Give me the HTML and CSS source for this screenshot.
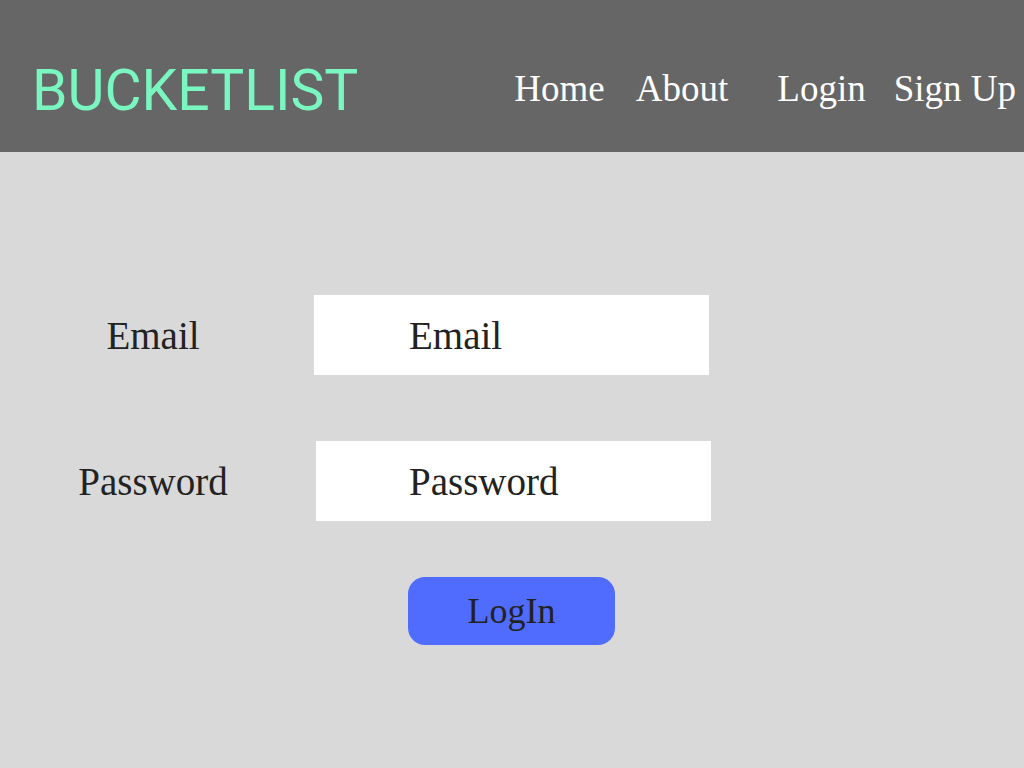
FILE: index.html
```html
<!DOCTYPE html>
<html lang="en">
<head>
<meta charset="utf-8">
<title>BucketList – Login</title>
<link rel="stylesheet" href="styles.css">
</head>
<body>
<header class="site-header">
  <a class="brand" href="#">BUCKETLIST</a>
  <nav class="main-nav">
    <a class="nav-link nav-home" href="#">Home</a>
    <a class="nav-link nav-about" href="#">About</a>
    <a class="nav-link" href="#">Login</a>
    <a class="nav-link" href="#">Sign Up</a>
  </nav>
</header>
<main class="login">
  <form class="login-form">
    <div class="field">
      <label class="field-label" for="email">Email</label>
      <input class="field-input" id="email" type="text" placeholder="Email">
    </div>
    <div class="field">
      <label class="field-label" for="password">Password</label>
      <input class="field-input field-input--shifted" id="password" type="text" placeholder="Password">
    </div>
    <div class="actions">
      <button class="login-btn" type="button">LogIn</button>
    </div>
  </form>
</main>
</body>
</html>
```
FILE: styles.css
```css
* { box-sizing: border-box; }

html, body {
  margin: 0;
  padding: 0;
}

body {
  background: #d9d9d9;
  width: 1024px;
  height: 768px;
  overflow: hidden;
  font-family: "Liberation Serif", "Times New Roman", serif;
  color: #222222;
}

.site-header {
  height: 152px;
  background: #666666;
  display: flex;
  align-items: flex-start;
  justify-content: space-between;
  padding: 0 8px 0 32px;
}

.brand {
  margin-top: 62px;
  font-family: Roboto, "Liberation Sans", sans-serif;
  font-size: 57px;
  line-height: 1;
  color: #7af7c1;
  text-decoration: none;
}

.main-nav {
  margin-top: 70px;
  display: flex;
  gap: 28px;
}

.nav-link {
  font-size: 37px;
  line-height: 1;
  color: #ffffff;
  text-decoration: none;
}

.nav-home {
  margin-right: 3px;
}

.nav-about {
  margin-right: 21px;
}

.login {
  padding-top: 143px;
}

.field {
  display: grid;
  grid-template-columns: 306px 395px;
  column-gap: 8px;
  align-items: center;
  height: 80px;
}

.field + .field {
  margin-top: 66px;
}

.field-label {
  text-align: center;
  font-size: 39px;
  color: #222222;
}

.field-input {
  height: 80px;
  width: 395px;
  border: none;
  outline: none;
  background: #ffffff;
  padding: 0 0 0 95px;
  font-family: "Liberation Serif", "Times New Roman", serif;
  font-size: 39px;
  color: #222222;
}

.field-input--shifted {
  margin-left: 2px;
  padding-left: 93px;
}

.field-input::placeholder {
  color: #222222;
  opacity: 1;
}

.actions {
  margin-top: 56px;
  margin-left: 314px;
  width: 395px;
  display: flex;
  justify-content: center;
}

.login-btn {
  width: 207px;
  height: 68px;
  border: none;
  border-radius: 17px;
  background: #506cff;
  font-family: "Liberation Serif", "Times New Roman", serif;
  font-size: 36px;
  color: #222222;
  padding: 0;
  cursor: pointer;
}
```
